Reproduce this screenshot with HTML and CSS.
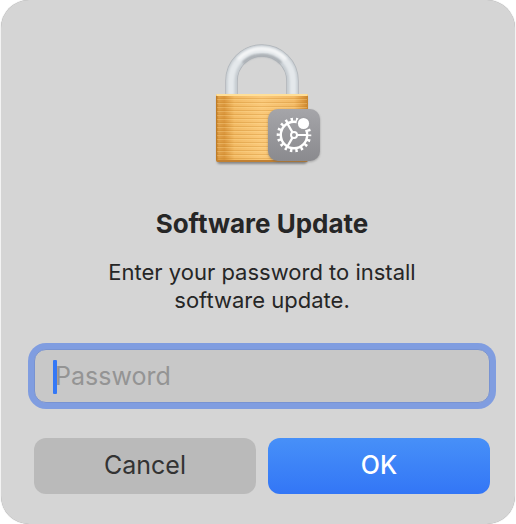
FILE: index.html
```html
<!DOCTYPE html>
<html lang="en">
<head>
    <meta charset="UTF-8">
    <meta name="viewport" content="width=device-width, initial-scale=1.0">
    <title>Software Update</title>
    <link rel="stylesheet" href="styles.css">
</head>
<body>
    <form class="dialog" role="dialog" aria-labelledby="dialog-title" aria-describedby="dialog-message">
        <svg class="lock-icon" viewBox="202 40 120 128" aria-hidden="true">
            <defs>
                <linearGradient id="body-fill" x1="0" x2="1" y1="0" y2="0">
                    <stop offset="0" stop-color="#b8731f"/>
                    <stop offset="0.03" stop-color="#e0a048"/>
                    <stop offset="0.09" stop-color="#da963c"/>
                    <stop offset="0.2" stop-color="#f2ba64"/>
                    <stop offset="0.5" stop-color="#fac97a"/>
                    <stop offset="0.85" stop-color="#f3ba66"/>
                    <stop offset="0.95" stop-color="#dc983f"/>
                    <stop offset="1" stop-color="#c8852f"/>
                </linearGradient>
                <linearGradient id="badge-fill" x1="0" x2="0" y1="0" y2="1">
                    <stop offset="0" stop-color="#a5a5a9"/>
                    <stop offset="1" stop-color="#8a8a8e"/>
                </linearGradient>
                <pattern id="brushed" width="4" height="4" patternUnits="userSpaceOnUse">
                    <rect width="4" height="1" y="2" fill="#c98122" opacity="0.3"/>
                    <rect width="4" height="1" y="3" fill="#ffe09a" opacity="0.3"/>
                </pattern>
                <filter id="soft" x="-20%" y="-20%" width="140%" height="140%">
                    <feGaussianBlur stdDeviation="1.2"/>
                </filter>
            </defs>

            <!-- shackle -->
            <g fill="none">
                <path d="M231.500 95V81a30.500 30.500 0 0 1 61 0V95" stroke="#aeb3b8" stroke-width="12.500"/>
                <path d="M231.500 95V81a30.500 30.500 0 0 1 61 0V95" stroke="#c6ccd1" stroke-width="11"/>
                <path d="M231 95V81a31 31 0 0 1 62 0V95" stroke="#e4e8eb" stroke-width="7" filter="url(#soft)"/>
                <path d="M243 63a27 27 0 0 1 38 0" stroke="#a4a9ae" stroke-width="2.500" filter="url(#soft)"/>
                <path d="M238 59.500a32 32 0 0 1 48 0" stroke="#f6f7f8" stroke-width="3" filter="url(#soft)"/>
            </g>

            <!-- body -->
            <rect x="217" y="97" width="90" height="67" rx="3" fill="#555" opacity="0.6" filter="url(#soft)"/>
            <rect x="216" y="94" width="92" height="68" rx="2" fill="url(#body-fill)"/>
            <rect x="217" y="97" width="90" height="62" fill="url(#brushed)"/>
            <rect x="216" y="94" width="92" height="2" rx="1" fill="#ffdf98"/>
            <rect x="217" y="160" width="90" height="2" rx="1" fill="#c28132"/>

            <!-- settings badge -->
            <rect x="268" y="110" width="52" height="52" rx="10" fill="#555" opacity="0.4" filter="url(#soft)"/>
            <rect x="268" y="109" width="52" height="52" rx="10" fill="url(#badge-fill)"/>
            <g fill="none" stroke="#fff">
                <circle cx="294" cy="135" r="15.500" stroke-width="3.600" stroke-dasharray="2.400 3.011" stroke-dashoffset="1.200"/>
                <circle cx="294" cy="135" r="13.200" stroke-width="2.400"/>
                <circle cx="294" cy="135" r="3" stroke-width="2"/>
                <path d="M297 135h10M292.500 132.400l-5.200-9M292.500 137.600l-5.200 9" stroke-width="2.200"/>
            </g>
            <circle cx="303.500" cy="123.500" r="7" fill="#9d9da1"/>
            <circle cx="303.500" cy="123.500" r="5.600" fill="#fff"/>
        </svg>

        <h1 class="title" id="dialog-title">Software Update</h1>
        <p class="message" id="dialog-message">Enter your password to install software update.</p>

        <div class="field">
            <input class="password" type="password" placeholder="Password" aria-label="Password">
            <span class="caret"></span>
        </div>

        <div class="buttons">
            <button class="button" type="button">Cancel</button>
            <button class="button button-primary" type="submit">OK</button>
        </div>
    </form>
</body>
</html>
```
FILE: styles.css
```css
* {
    box-sizing: border-box;
}

body {
    margin: 0;
    background: #fff;
    color: #262626;
    font-family: Inter, "Liberation Sans", sans-serif;
}

.dialog {
    margin: 0 1px;
    padding: 40px 25px 30px 33px;
    background: #d5d5d5;
    border-radius: 28px;
    box-shadow: 0 0 1px #888;
    display: flex;
    flex-direction: column;
    align-items: center;
}

.lock-icon {
    width: 120px;
    height: 128px;
}

.title {
    margin: 40px 0 0;
    font-size: 26px;
    line-height: 32px;
    font-weight: 700;
}

.message {
    margin: 18px 0 0;
    max-width: 340px;
    font-size: 22px;
    line-height: 28px;
    text-align: center;
}

.field {
    position: relative;
    width: 100%;
    margin-top: 35px;
}

.password {
    display: block;
    width: 100%;
    height: 54px;
    padding: 0 20px;
    border: 1px solid #7893d2;
    border-radius: 12px;
    outline: 0;
    background: #c8c8c8;
    box-shadow: 0 0 0 6px #809de0;
    color: #262626;
    font-family: inherit;
    font-size: 25px;
}

.password::placeholder {
    color: #949494;
    opacity: 1;
}

/* text cursor */
.caret {
    position: absolute;
    left: 19px;
    top: 11px;
    width: 4px;
    height: 34px;
    border-radius: 1px;
    background: #3478f6;
}

.buttons {
    display: flex;
    gap: 12px;
    width: 100%;
    margin-top: 35px;
}

.button {
    flex: 1;
    height: 56px;
    padding: 0 0 3px;
    border: 0;
    border-radius: 12px;
    background: #bababa;
    color: #333;
    font-family: inherit;
    font-size: 25px;
}

.button-primary {
    background: linear-gradient(#4790f8, #3376f6);
    color: #fff;
    font-weight: 500;
}
```
